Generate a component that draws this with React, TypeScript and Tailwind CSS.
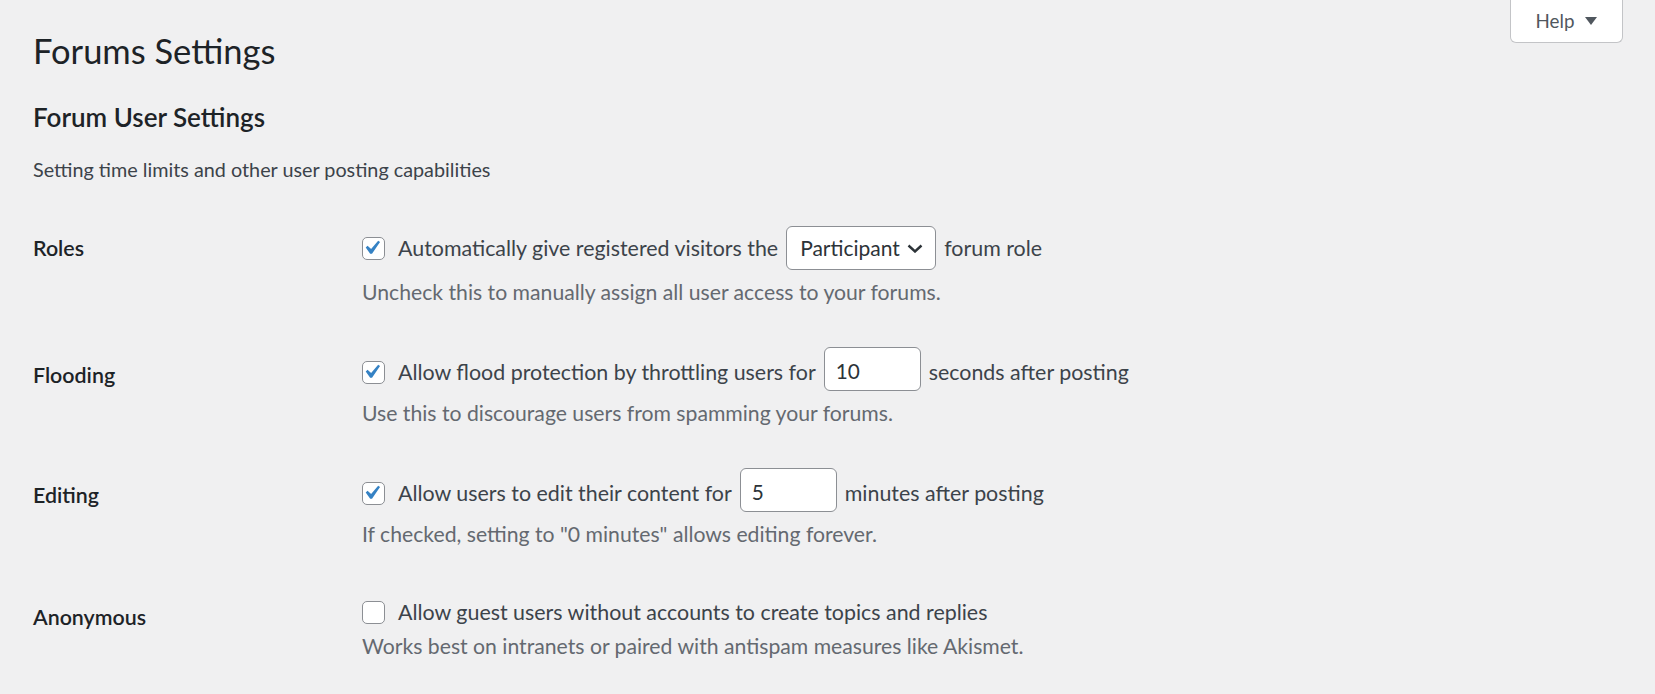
import React from "react";

// WordPress-style check, viewBox cropped to the box itself
const Checkbox = ({ checked, className = "" }: { checked?: boolean; className?: string }) => (
  <span
    role="checkbox"
    aria-checked={checked}
    className={`flex h-[23px] w-[23px] shrink-0 rounded-[5px] border border-[#8c8f94] bg-white ${className}`}
  >
    {checked && (
      <svg viewBox="3.81 2.86 15.24 15.24" className="h-full w-full">
        <path d="M14.83 4.89l1.34.94-5.81 8.38H9.02L5.78 9.67l1.34-1.25 2.57 2.4z" fill="#3582c4" />
      </svg>
    )}
  </span>
);

const NumberInput = ({ value }: { value: string }) => (
  <input
    type="text"
    defaultValue={value}
    className="box-border h-[44px] w-[97px] rounded-[6px] border border-[#8c8f94] bg-white pl-[11px] pt-[3px] text-[20.8px] text-[#2c3338] outline-none"
  />
);

const RoleSelect = () => (
  <div className="flex h-[44px] w-[150px] items-center justify-between rounded-[6px] border border-[#8c8f94] bg-white pl-[13px] pr-[12px] text-[21px] text-[#2c3338]">
    <span className="leading-[26px]">Participant</span>
    <svg width="16" height="9" viewBox="0 0 16 9" fill="none">
      <polyline points="1.5,1.5 8,7.5 14.5,1.5" stroke="#2c3338" strokeWidth="2.4" />
    </svg>
  </div>
);

interface RowProps {
  label: string;
  labelPad: string;
  lineClass: string;
  shift?: boolean;
  checked?: boolean;
  children: React.ReactNode;
  description: string;
}

const SettingRow = ({ label, labelPad, lineClass, shift, checked, children, description }: RowProps) => (
  <div className="grid grid-cols-[329px_1fr]">
    <div className={`${labelPad} text-[21.4px] font-semibold leading-[26px] text-[#1d2327]`}>{label}</div>
    <div>
      <div className={`flex items-center gap-[8px] text-[21.4px] leading-[26px] ${lineClass}`}>
        <Checkbox checked={checked} className={`mr-[5px] ${shift ? "mt-[6px]" : ""}`} />
        {children}
      </div>
      <p className="mt-[9px] text-[21.2px] leading-[26px] text-[#646970]">{description}</p>
    </div>
  </div>
);

export default function App() {
  return (
    <div className="min-h-[694px] bg-[#f0f0f1] pl-[33px] pr-[32px] font-['Lato',sans-serif] text-[#3c434a]">
      <div className="flex items-start justify-between">
        <h1 className="mt-[31px] text-[34.5px] font-normal leading-[40px] text-[#1d2327]">Forums Settings</h1>
        <button className="flex h-[43px] w-[113px] items-center justify-center gap-[11px] rounded-b-[6px] border border-t-0 border-[#c3c4c7] bg-white text-[18.8px] text-[#50575e]">
          <span className="leading-[22px]">Help</span>
          <svg width="12" height="8" viewBox="0 0 12 8">
            <polygon points="0,0 12,0 6,8" fill="#50575e" />
          </svg>
        </button>
      </div>

      <h2 className="mt-[31px] text-[26px] font-semibold leading-[30px] text-[#1d2327]">Forum User Settings</h2>
      <p className="mt-[25px] text-[19.8px] leading-[24px] text-[#3c434a]">
        Setting time limits and other user posting capabilities
      </p>

      <div className="mt-[45px]">
        <SettingRow
          label="Roles"
          labelPad="pt-[9px]"
          lineClass="h-[44px]"
          checked
          description="Uncheck this to manually assign all user access to your forums."
        >
          <span>Automatically give registered visitors the</span>
          <RoleSelect />
          <span>forum role</span>
        </SettingRow>
      </div>

      <div className="mt-[42px]">
        <SettingRow
          label="Flooding"
          labelPad="pt-[14.5px]"
          lineClass="h-[44px]"
          shift
          checked
          description="Use this to discourage users from spamming your forums."
        >
          <span className="mt-[6px]">Allow flood protection by throttling users for</span>
          <NumberInput value="10" />
          <span className="mt-[6px]">seconds after posting</span>
        </SettingRow>
      </div>

      <div className="mt-[42px]">
        <SettingRow
          label="Editing"
          labelPad="pt-[14px]"
          lineClass="h-[44px]"
          shift
          checked
          description={'If checked, setting to "0 minutes" allows editing forever.'}
        >
          <span className="mt-[6px]">Allow users to edit their content for</span>
          <NumberInput value="5" />
          <span className="mt-[6px]">minutes after posting</span>
        </SettingRow>
      </div>

      <div className="mt-[53px]">
        <SettingRow
          label="Anonymous"
          labelPad="pt-[4px]"
          lineClass="h-[24px]"
          description="Works best on intranets or paired with antispam measures like Akismet."
        >
          <span>Allow guest users without accounts to create topics and replies</span>
        </SettingRow>
      </div>
    </div>
  );
}
